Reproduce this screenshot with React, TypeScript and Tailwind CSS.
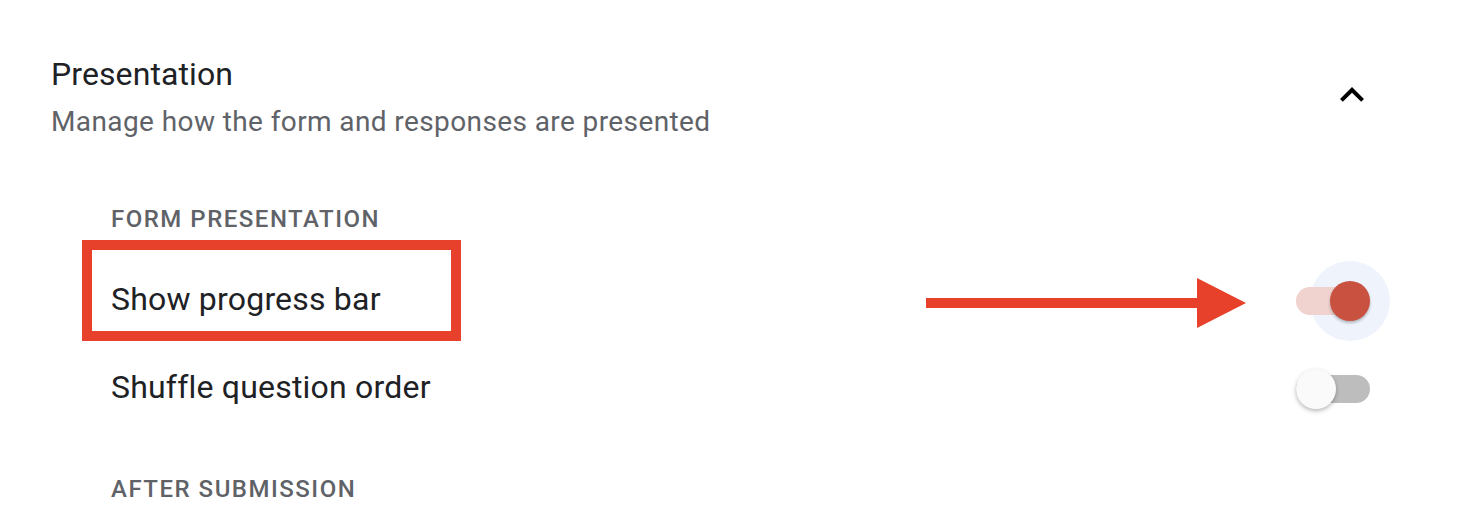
import React from "react";

function Toggle({ on }: { on: boolean }) {
  return (
    <div className="relative w-[74px] h-[40px] flex items-center">
      {on && (
        <div className="absolute left-[14px] top-[-20px] w-[80px] h-[80px] rounded-full bg-[#eef3fc]" />
      )}
      <div
        className={
          "relative w-[74px] h-[28px] rounded-full " + (on ? "bg-[#f0d2cf]" : "bg-[#bdbdbd]")
        }
      />
      {on ? (
        <div className="absolute left-[34px] top-0 w-[40px] h-[40px] rounded-full bg-[#c9513f] shadow-[0_2px_3px_rgba(0,0,0,0.25)]" />
      ) : (
        <div className="absolute left-0 top-0 w-[40px] h-[40px] rounded-full bg-[#fafafa] shadow-[0_2px_4px_rgba(0,0,0,0.28)]" />
      )}
    </div>
  );
}

export default function App() {
  return (
    <div
      className="relative w-[1458px] h-[512px] bg-white overflow-hidden"
      style={{ fontFamily: "Roboto, 'Noto Sans', sans-serif" }}
    >
      <div className="flex items-center justify-between pl-[51px] pr-[82px] pt-[54px]">
        <div className="flex flex-col">
          <div className="text-[32px] leading-[40px] tracking-[0.1px] text-[#202124]">Presentation</div>
          <div className="mt-[10px] text-[28px] leading-[36px] tracking-[0.4px] text-[#5f6368]">
            Manage how the form and responses are presented
          </div>
        </div>
        <svg width="48" height="48" viewBox="0 0 24 24" className="mt-[-4px]">
          <path d="M12 8l-6 6 1.41 1.41L12 10.83l4.59 4.58L18 14z" fill="#000" />
        </svg>
      </div>

      <div className="flex flex-col pl-[111px] pr-[88px] mt-[63px]">
        <div className="text-[24px] leading-[32px] font-medium tracking-[1.5px] text-[#5f6368]">
          FORM PRESENTATION
        </div>
        <div className="mt-[22px] h-[88px] flex items-center justify-between">
          <div className="text-[32px] leading-[40px] tracking-[0.2px] text-[#202124] mt-[-4px]">Show progress bar</div>
          <Toggle on={true} />
        </div>
        <div className="h-[88px] flex items-center justify-between">
          <div className="text-[32px] leading-[40px] tracking-[0.2px] text-[#202124] mt-[-4px]">Shuffle question order</div>
          <Toggle on={false} />
        </div>
        <div className="mt-[40px] text-[24px] leading-[32px] font-medium tracking-[1.5px] text-[#5f6368]">
          AFTER SUBMISSION
        </div>
      </div>

      <div className="absolute left-[82px] top-[240px] w-[379px] h-[101px] border-[10px] border-[#e8412b]" />
      <svg
        className="absolute left-[920px] top-[270px]"
        width="340"
        height="70"
        viewBox="0 0 340 70"
      >
        <rect x="6" y="28" width="275" height="10" fill="#e8412b" />
        <polygon points="277,8 326,33 277,58" fill="#e8412b" />
      </svg>
    </div>
  );
}
